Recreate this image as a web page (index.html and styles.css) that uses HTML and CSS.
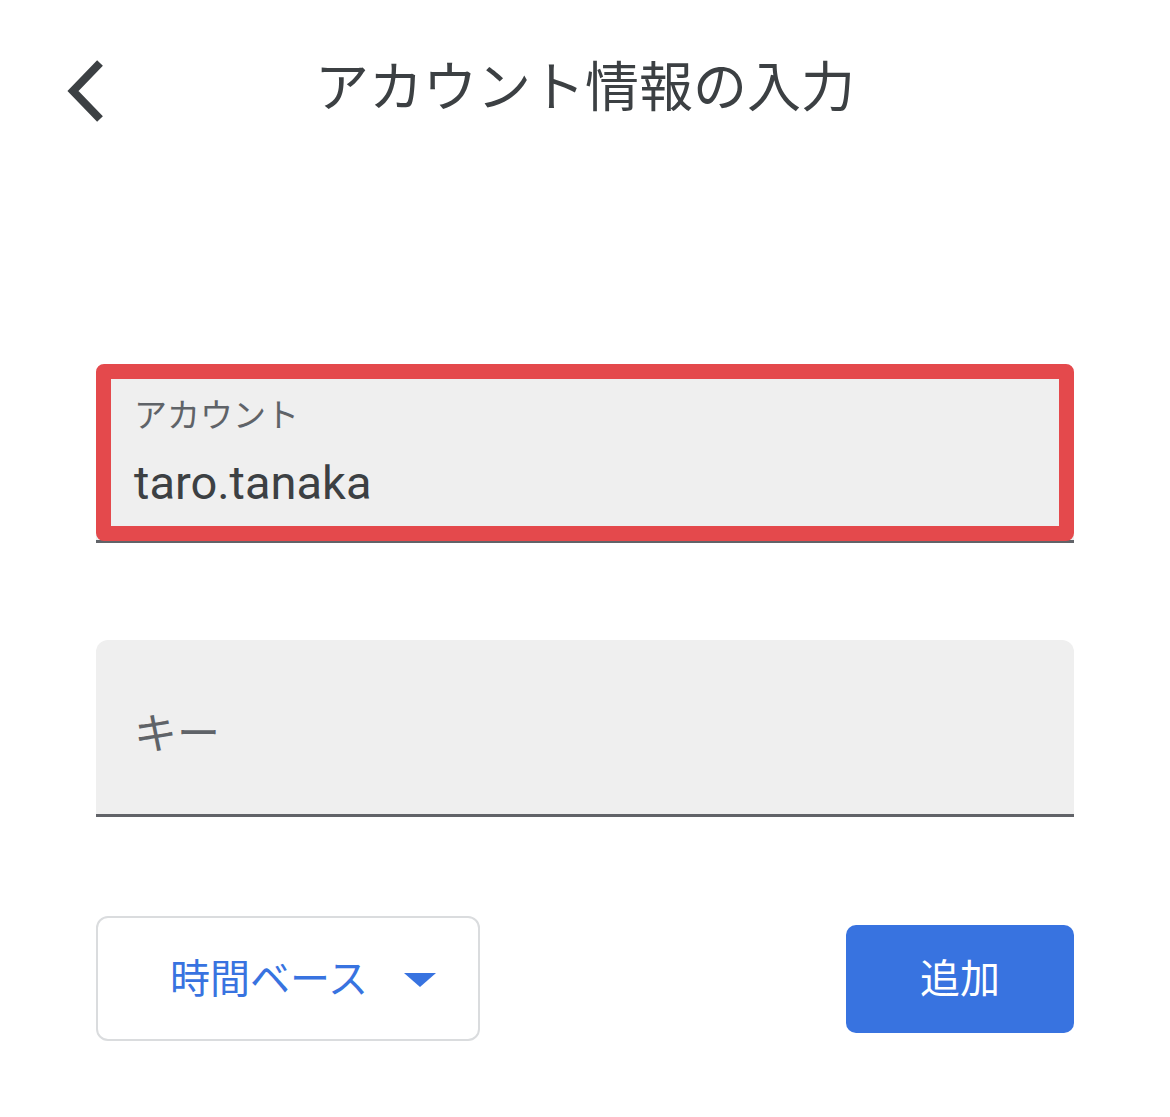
FILE: index.html
```html
<!DOCTYPE html>
<html lang="ja">
<head>
    <meta charset="UTF-8">
    <meta name="viewport" content="width=device-width, initial-scale=1.0">
    <title>アカウント情報の入力</title>
    <link rel="stylesheet" href="styles.css">
</head>
<body>
    <div class="header">
        <button class="back" aria-label="戻る">
            <svg width="48" height="68" viewBox="0 0 48 68">
                <polyline points="37,6 10,34 37,62" fill="none" stroke="#3c4043" stroke-width="8" stroke-linejoin="miter"/>
            </svg>
        </button>
        <h1 class="title">アカウント情報の入力</h1>
    </div>

    <div class="form">
        <div class="field filled highlight">
            <label class="field-label">アカウント</label>
            <div class="field-value">taro.tanaka</div>
        </div>

        <div class="field">
            <div class="field-placeholder">キー</div>
        </div>

        <div class="actions">
            <button class="select">
                <span class="select-text">時間ベース</span>
                <span class="caret"></span>
            </button>
            <button class="add">追加</button>
        </div>
    </div>
</body>
</html>
```

FILE: styles.css
```css
body {
    margin: 0;
    font-family: Roboto, "Noto Sans CJK JP", sans-serif;
    color: #3c4043;
    background: #fff;
}
button {
    font-family: inherit;
    cursor: pointer;
}
.header {
    position: relative;
    height: 180px;
    display: flex;
    justify-content: center;
    align-items: flex-start;
}
.back {
    position: absolute;
    left: 63px;
    top: 57px;
    padding: 0;
    border: none;
    background: none;
    display: flex;
}
.title {
    margin: 57px 0 0;
    font-size: 54px;
    font-weight: 400;
    line-height: 1.2;
    color: #3c4043;
}
.form {
    margin: 184px 96px 0;
    display: flex;
    flex-direction: column;
}
.field {
    position: relative;
    height: 174px;
    background: #efefef;
    border-radius: 12px 12px 0 0;
    border-bottom: 3px solid #616368;
    padding: 0 38px;
    display: flex;
    flex-direction: column;
    justify-content: center;
}
.field.filled {
    height: 176px;
    justify-content: flex-start;
}
.field + .field {
    margin-top: 97px;
}
/* red box drawn over the focused field */
.field.highlight::after {
    content: "";
    position: absolute;
    left: 0;
    right: 0;
    top: 0;
    bottom: -1px;
    border: 15px solid #e4494c;
    border-radius: 8px;
}
.field-label {
    margin-top: 30px;
    font-size: 33px;
    line-height: 44px;
    color: #5f6368;
}
.field-value {
    margin-top: 16px;
    font-size: 47px;
    line-height: 58px;
    color: #3c4043;
}
.field-placeholder {
    font-size: 43px;
    line-height: 56px;
    color: #5f6368;
    margin-top: 13px;
}
.actions {
    margin-top: 99px;
    display: flex;
    justify-content: space-between;
    align-items: center;
}
.select {
    width: 384px;
    height: 125px;
    background: #fff;
    border: 2.5px solid #dadcde;
    border-radius: 12px;
    padding: 0 0 0 72px;
    display: flex;
    align-items: center;
    gap: 36px;
    font-size: 40px;
    color: #3873e0;
}
.select-text {
    margin-top: -6px;
}
.caret {
    width: 0;
    height: 0;
    border-left: 16px solid transparent;
    border-right: 16px solid transparent;
    border-top: 14px solid #3873e0;
    margin-top: 2px;
}
.add {
    width: 228px;
    height: 108px;
    border: none;
    border-radius: 10px;
    background: #3873e0;
    color: #fff;
    font-size: 40px;
    padding: 0 0 6px;
}
```
